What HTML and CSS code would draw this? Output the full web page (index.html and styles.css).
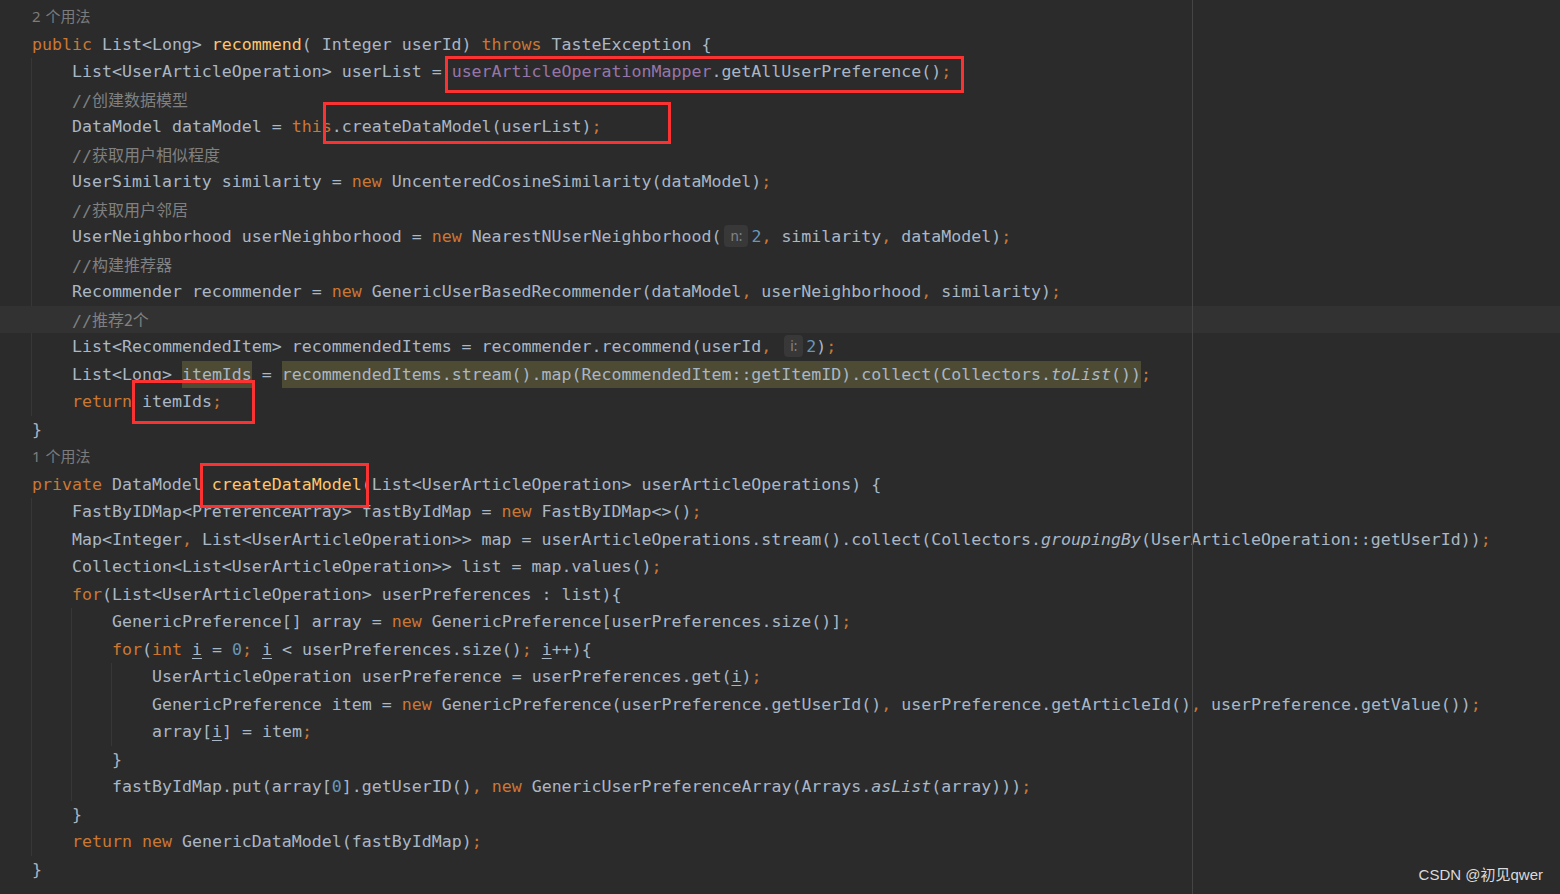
FILE: index.html
```html
<!DOCTYPE html>
<html lang="zh-CN">
<head>
    <meta charset="UTF-8">
    <meta name="viewport" content="width=device-width, initial-scale=1.0">
    <title>RecommendService.java</title>
    <link rel="stylesheet" href="styles.css">
</head>
<body>
    <div id="editor">
        <div class="code">
            <div class="line usage">2 个用法</div>
            <div class="line"><span class="k">public</span> List&lt;Long&gt; <span class="m">recommend</span>( Integer userId) <span class="k">throws</span> TasteException {</div>
            <div class="body">
                <div class="line">List&lt;UserArticleOperation&gt; userList = <span class="f">userArticleOperationMapper</span>.getAllUserPreference()<span class="p">;</span></div>
                <div class="line c">//<span class="cjk">创建数据模型</span></div>
                <div class="line">DataModel dataModel = <span class="k">this</span>.createDataModel(userList)<span class="p">;</span></div>
                <div class="line c">//<span class="cjk">获取用户相似程度</span></div>
                <div class="line">UserSimilarity similarity = <span class="k">new</span> UncenteredCosineSimilarity(dataModel)<span class="p">;</span></div>
                <div class="line c">//<span class="cjk">获取用户邻居</span></div>
                <div class="line">UserNeighborhood userNeighborhood = <span class="k">new</span> NearestNUserNeighborhood(<span class="hint hint-n">n:</span><span class="n">2</span><span class="p">,</span> similarity<span class="p">,</span> dataModel)<span class="p">;</span></div>
                <div class="line c">//<span class="cjk">构建推荐器</span></div>
                <div class="line">Recommender recommender = <span class="k">new</span> GenericUserBasedRecommender(dataModel<span class="p">,</span> userNeighborhood<span class="p">,</span> similarity)<span class="p">;</span></div>
                <div class="line c current">//<span class="cjk">推荐2个</span></div>
                <div class="line">List&lt;RecommendedItem&gt; recommendedItems = recommender.recommend(userId<span class="p">,</span> <span class="hint hint-i">i:</span><span class="n">2</span>)<span class="p">;</span></div>
                <div class="line">List&lt;Long&gt; <span class="hl">itemIds</span> = <span class="hl">recommendedItems.stream().map(RecommendedItem::getItemID).collect(Collectors.<span class="s">toList</span>())</span><span class="p">;</span></div>
                <div class="line"><span class="k">return</span> itemIds<span class="p">;</span></div>
            </div>
            <div class="line">}</div>
            <div class="line usage">1 个用法</div>
            <div class="line"><span class="k">private</span> DataModel <span class="m">createDataModel</span>(List&lt;UserArticleOperation&gt; userArticleOperations) {</div>
            <div class="body">
                <div class="line">FastByIDMap&lt;PreferenceArray&gt; fastByIdMap = <span class="k">new</span> FastByIDMap&lt;&gt;()<span class="p">;</span></div>
                <div class="line">Map&lt;Integer<span class="p">,</span> List&lt;UserArticleOperation&gt;&gt; map = userArticleOperations.stream().collect(Collectors.<span class="s">groupingBy</span>(UserArticleOperation::getUserId))<span class="p">;</span></div>
                <div class="line">Collection&lt;List&lt;UserArticleOperation&gt;&gt; list = map.values()<span class="p">;</span></div>
                <div class="line"><span class="k">for</span>(List&lt;UserArticleOperation&gt; userPreferences : list){</div>
                <div class="body">
                    <div class="line">GenericPreference[] array = <span class="k">new</span> GenericPreference[userPreferences.size()]<span class="p">;</span></div>
                    <div class="line"><span class="k">for</span>(<span class="k">int</span> <span class="u">i</span> = <span class="n">0</span><span class="p">;</span> <span class="u">i</span> &lt; userPreferences.size()<span class="p">;</span> <span class="u">i</span>++){</div>
                    <div class="body">
                        <div class="line">UserArticleOperation userPreference = userPreferences.get(<span class="u">i</span>)<span class="p">;</span></div>
                        <div class="line">GenericPreference item = <span class="k">new</span> GenericPreference(userPreference.getUserId()<span class="p">,</span> userPreference.getArticleId()<span class="p">,</span> userPreference.getValue())<span class="p">;</span></div>
                        <div class="line">array[<span class="u">i</span>] = item<span class="p">;</span></div>
                    </div>
                    <div class="line">}</div>
                    <div class="line">fastByIdMap.put(array[<span class="n">0</span>].getUserID()<span class="p">,</span> <span class="k">new</span> GenericUserPreferenceArray(Arrays.<span class="s">asList</span>(array)))<span class="p">;</span></div>
                </div>
                <div class="line">}</div>
                <div class="line"><span class="k">return</span> <span class="k">new</span> GenericDataModel(fastByIdMap)<span class="p">;</span></div>
            </div>
            <div class="line">}</div>
        </div>

        <div class="margin-guide"></div>

        <!-- red marks drawn on top of the screenshot -->
        <div class="mark mark-1"></div>
        <div class="mark mark-2"></div>
        <div class="mark mark-3"></div>
        <div class="mark mark-4"></div>

        <div class="watermark">CSDN @初见qwer</div>
    </div>
</body>
</html>
```

FILE: styles.css
```css
body {
    margin: 0;
    background-color: #2b2b2b;
    overflow: hidden;
}
#editor {
    position: relative;
    width: 1560px;
    height: 894px;
    overflow: hidden;
    background-color: #2b2b2b;
}
.code {
    padding: 3px 0 0 32px;
    font-family: "DejaVu Sans Mono", "Noto Sans CJK SC", monospace;
    font-size: 16.6px;
    color: #a9b7c6;
}
.line {
    height: 27.5px;
    line-height: 27.5px;
    white-space: pre;
}
.body {
    margin-left: -1px;
    padding-left: 40px;
    border-left: 1px solid #373737;
}
.usage {
    font-family: "Noto Sans", "Noto Sans CJK SC", sans-serif;
    font-size: 15px;
    color: #7c7c7c;
    word-spacing: 1px;
}
.current {
    background-color: #323232;
    box-shadow: -72px 0 0 #323232;
}

/* syntax colours */
.k { color: #cc7832; }
.p { color: #cc7832; }
.m { color: #ffc66d; }
.f { color: #9876aa; }
.n { color: #6897bb; }
.c { color: #808080; }
.s { font-style: italic; }
.u { text-decoration: underline; text-underline-offset: 3px; }
.cjk {
    font-family: "Noto Sans CJK SC", sans-serif;
    font-size: 16px;
    vertical-align: 1px;
}
.hl {
    display: inline-block;
    background-color: #4d4b34;
}
.hint {
    display: inline-block;
    height: 22px;
    line-height: 22px;
    margin: 0 3px;
    border-radius: 4px;
    background-color: #383838;
    color: #858585;
    font-family: "Noto Sans", sans-serif;
    font-size: 13.5px;
    text-align: center;
    vertical-align: 1px;
}
.hint-n {
    width: 24px;
}
.hint-i {
    width: 19px;
}

.margin-guide {
    position: absolute;
    top: 0;
    left: 1192px;
    width: 1px;
    height: 894px;
    background-color: #454545;
}
.mark {
    position: absolute;
    border: 3px solid #fa3232;
    box-sizing: border-box;
}
.mark-1 { left: 445px; top: 56px; width: 519px; height: 37px; }
.mark-2 { left: 323px; top: 102px; width: 348px; height: 42px; }
.mark-3 { left: 132px; top: 380px; width: 123px; height: 44px; }
.mark-4 { left: 200px; top: 463px; width: 169px; height: 45px; }

.watermark {
    position: absolute;
    right: 17px;
    bottom: 10px;
    font-family: "Liberation Sans", "Noto Sans CJK SC", sans-serif;
    font-size: 15px;
    color: #dadada;
}
```
